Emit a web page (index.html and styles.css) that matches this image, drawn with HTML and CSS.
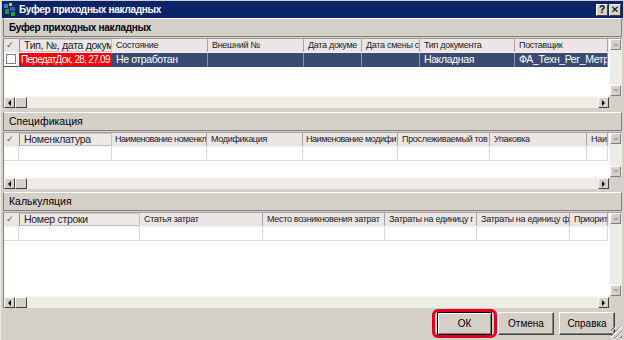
FILE: index.html
```html
<!DOCTYPE html>
<html>
	<head>
		<meta charset="utf-8">
		<title>Буфер приходных накладных</title>
		<link rel="stylesheet" href="styles.css">
	</head>
	<body>
		<div class="window">
			<div class="titlebar">
				<svg class="app-icon" width="12" height="13" viewBox="0 0 12 13">
					<rect x="0" y="1" width="4" height="4" fill="#2d7fd0"/>
					<rect x="5" y="0" width="3" height="3" fill="#f0c020"/>
					<rect x="1" y="6" width="4" height="5" fill="#1a9a3a"/>
					<rect x="6" y="4" width="5" height="4" fill="#3060b0"/>
					<rect x="7" y="9" width="4" height="4" fill="#20a040"/>
				</svg>
				<span class="title">Буфер приходных накладных</span>
				<span class="tb-btns">
					<span class="tb-btn">?</span>
					<span class="tb-btn">✕</span>
				</span>
			</div>

			<div class="content">
				<!-- буфер -->
				<div class="caption bold">Буфер приходных накладных</div>
				<div class="grid g1">
					<div class="grid-main">
						<div class="grid-area">
							<div class="hrow">
								<div class="hc ck">✓</div>
								<div class="hc big w93">Тип, №, дата докум</div>
								<div class="hc w96">Состояние</div>
								<div class="hc w96">Внешний №</div>
								<div class="hc w58">Дата докуме</div>
								<div class="hc w58">Дата смены с</div>
								<div class="hc w95">Тип документа</div>
								<div class="hc w93">Поставщик</div>
							</div>
							<div class="drow sel">
								<div class="dc ck"><span class="box"></span></div>
								<div class="dc red w93">ПередатДок, 28, 27.09</div>
								<div class="dc w96">Не отработан</div>
								<div class="dc w96"></div>
								<div class="dc w58"></div>
								<div class="dc w58"></div>
								<div class="dc w95">Накладная</div>
								<div class="dc w93">ФА_Техн_Рег_Метр</div>
							</div>
						</div>
						<div class="hscroll">
							<span class="sb-btn"><i class="arr left"></i></span>
							<span class="sb-btn thumb"></span>
							<span class="sb-track"></span>
							<span class="sb-btn"><i class="arr right"></i></span>
						</div>
					</div>
					<div class="vscroll">
						<span class="sb-btn"><i class="arr up"></i></span>
						<span class="sb-track"></span>
						<span class="sb-btn"><i class="arr down"></i></span>
						<span class="corner"></span>
					</div>
				</div>

				<!-- спецификация -->
				<div class="caption">Спецификация</div>
				<div class="grid g2">
					<div class="grid-main">
						<div class="grid-area">
							<div class="hrow">
								<div class="hc ck">✓</div>
								<div class="hc big w93">Номенклатура</div>
								<div class="hc tight w95">Наименование номенкл</div>
								<div class="hc w96">Модификация</div>
								<div class="hc tight w95">Наименование модифи</div>
								<div class="hc w92">Прослеживаемый тов</div>
								<div class="hc w97">Упаковка</div>
								<div class="hc w21">Наи</div>
							</div>
							<div class="drow">
								<div class="dc ck"></div>
								<div class="dc w93"></div>
								<div class="dc w95"></div>
								<div class="dc w96"></div>
								<div class="dc w95"></div>
								<div class="dc w92"></div>
								<div class="dc w97"></div>
								<div class="dc w21"></div>
							</div>
						</div>
						<div class="hscroll">
							<span class="sb-btn"><i class="arr left"></i></span>
							<span class="sb-btn thumb"></span>
							<span class="sb-track"></span>
							<span class="sb-btn"><i class="arr right"></i></span>
						</div>
					</div>
					<div class="vscroll">
						<span class="sb-btn"><i class="arr up"></i></span>
						<span class="sb-track"></span>
						<span class="sb-btn"><i class="arr down"></i></span>
						<span class="corner"></span>
					</div>
				</div>

				<!-- калькуляция -->
				<div class="caption">Калькуляция</div>
				<div class="grid g3">
					<div class="grid-main">
						<div class="grid-area">
							<div class="hrow">
								<div class="hc ck">✓</div>
								<div class="hc big w121">Номер строки</div>
								<div class="hc w123">Статья затрат</div>
								<div class="hc w122">Место возникновения затрат</div>
								<div class="hc w92">Затраты на единицу г</div>
								<div class="hc w93">Затраты на единицу ф</div>
								<div class="hc w38">Приорит</div>
							</div>
							<div class="drow">
								<div class="dc ck"></div>
								<div class="dc w121"></div>
								<div class="dc w123"></div>
								<div class="dc w122"></div>
								<div class="dc w92"></div>
								<div class="dc w93"></div>
								<div class="dc w38"></div>
							</div>
						</div>
						<div class="hscroll">
							<span class="sb-btn"><i class="arr left"></i></span>
							<span class="sb-btn thumb"></span>
							<span class="sb-track"></span>
							<span class="sb-btn"><i class="arr right"></i></span>
						</div>
					</div>
					<div class="vscroll">
						<span class="sb-btn"><i class="arr up"></i></span>
						<span class="sb-track"></span>
						<span class="sb-btn"><i class="arr down"></i></span>
						<span class="corner"></span>
					</div>
				</div>
			</div>

			<div class="buttons">
				<span class="ring"><button class="btn def">ОК</button></span>
				<button class="btn">Отмена</button>
				<button class="btn">Справка</button>
			</div>
			<span class="grip"></span>
		</div>
	</body>
</html>
```

FILE: styles.css
```css
* {
	margin: 0;
	padding: 0;
	box-sizing: border-box;
}

body {
	font-family: "Liberation Sans", "DejaVu Sans", sans-serif;
	font-size: 11px;
	color: #000;
	background: #fff;
}

.window {
	width: 624px;
	height: 340px;
	background: #d4d0c8;
	display: flex;
	flex-direction: column;
	padding-top: 1px;
	position: relative;
	overflow: hidden;
	border-left: 1px solid #ece9e2;
}

/* заголовок окна */
.titlebar {
	height: 17px;
	margin: 0 1px 0 1px;
	background: #0a246a;
	color: #fff;
	display: flex;
	align-items: center;
	padding-left: 2px;
	gap: 3px;
	font-weight: bold;
	font-size: 10px;
	letter-spacing: -0.3px;
}

.tb-btns {
	margin-left: auto;
	display: flex;
	gap: 1px;
	padding-right: 2px;
	letter-spacing: 0;
}

.tb-btn {
	width: 12px;
	height: 12px;
	background: #d4d0c8;
	border: 1px solid;
	border-color: #fff #404040 #404040 #fff;
	color: #000;
	font-size: 10px;
	line-height: 10px;
	text-align: center;
	font-weight: bold;
}

.content {
	padding: 0 2px 0 2px;
	display: flex;
	flex-direction: column;
}

.caption {
	height: 19px;
	padding-left: 5px;
	line-height: 17px;
	border: 1px solid;
	border-color: #fff #808080 #808080 #808080;
	background: #d4d0c8;
	font-size: 10.5px;
}

.caption.bold {
	font-weight: bold;
	font-size: 10px;
	letter-spacing: -0.3px;
}

.grid {
	display: flex;
	border-left: 1px solid #808080;
	border-top: 1px solid #a0a0a0;
	margin-top: 1px;
	background: #fff;
}

.g1 { height: 70px; margin-bottom: 4px; }
.g2 { height: 57px; margin-bottom: 3px; }
.g3 { height: 96px; }

.grid-main {
	flex: 1;
	display: flex;
	flex-direction: column;
	min-width: 0;
}

.grid-area {
	flex: 1;
	overflow: hidden;
	background: #fff;
}

/* строки таблиц */
.hrow {
	display: flex;
	height: 14px;
	background: #ebe5e5;
	border-bottom: 1px solid #f4f0f0;
}

.hc {
	flex: none;
	padding-left: 4px;
	white-space: nowrap;
	overflow: hidden;
	border-right: 1px solid #a8a4a0;
	line-height: 13px;
	font-size: 9px;
	letter-spacing: -0.3px;
	color: #222;
}

.hc.tight {
	padding-left: 3px;
	letter-spacing: -0.45px;
}

.hc.big {
	font-size: 10.5px;
	letter-spacing: -0.3px;
	border: 1px solid #c8c0c0;
	border-left-color: #888;
	background: #ede7e7;
	line-height: 11px;
}

.hc.ck {
	color: #555;
	padding-left: 2px;
	border-right: none;
	letter-spacing: 0;
}

.drow {
	display: flex;
	height: 14px;
}

.dc {
	flex: none;
	padding-left: 4px;
	white-space: nowrap;
	overflow: hidden;
	border-right: 1px solid #d8d8d8;
	border-bottom: 1px solid #d8d8d8;
	line-height: 13px;
	font-size: 10.5px;
	letter-spacing: -0.4px;
}

.sel .dc {
	background: #3b4a72;
	color: #fff;
	border-right-color: #8a93b0;
	border-bottom-color: #3b4a72;
}

.sel .dc.red {
	background: #ff0000;
	border-right-color: #ff0000;
	padding-left: 2px;
	font-size: 10px;
	letter-spacing: -0.7px;
}

.sel .dc.ck {
	background: #fff;
	border-right-color: #fff;
	padding-left: 2px;
}

.box {
	display: block;
	width: 10px;
	height: 10px;
	margin-top: 1px;
	border: 1px solid #808080;
	background: #fff;
}

.ck { width: 15px; }
.w21 { width: 21px; }
.w38 { width: 38px; }
.w58 { width: 58px; }
.w92 { width: 92px; }
.w93 { width: 93px; }
.w95 { width: 95px; }
.w96 { width: 96px; }
.w97 { width: 97px; }
.w121 { width: 121px; }
.w122 { width: 122px; }
.w123 { width: 123px; }

/* полосы прокрутки */
.hscroll {
	height: 12px;
	display: flex;
	background: #ecebe6;
	border-top: 1px solid #f8f8f6;
}

.sb-btn {
	flex: none;
	width: 11px;
	height: 11px;
	background: #d4d0c8;
	border: 1px solid;
	border-color: #fff #404040 #404040 #fff;
	display: flex;
	align-items: center;
	justify-content: center;
}

.sb-btn.thumb {
	width: 12px;
}

.sb-track {
	flex: 1;
}

.vscroll {
	width: 13px;
	display: flex;
	flex-direction: column;
	align-items: flex-end;
	background: #ecebe6;
	padding-right: 1px;
	border-left: 1px solid #f8f8f6;
}

.vscroll .sb-btn {
	border-color: #fff #808080 #808080 #fff;
}

.vscroll .corner {
	width: 13px;
	height: 12px;
	margin-right: -1px;
	background: #d4d0c8;
}

.arr {
	display: block;
	width: 0;
	height: 0;
	border: 3px solid transparent;
}

.arr.left {
	border-left-width: 0;
	border-right-color: #000;
}

.arr.right {
	border-right-width: 0;
	border-left-color: #000;
}

.arr.up {
	border-width: 0 3px 3px 3px;
	border-bottom-color: #a8a8a8;
}

.arr.down {
	border-width: 3px 3px 0 3px;
	border-top-color: #a8a8a8;
}

/* кнопки */
.buttons {
	flex: 1;
	display: flex;
	justify-content: flex-end;
	align-items: flex-start;
	padding: 4px 9px 0 0;
	gap: 5px;
}

.btn {
	width: 56px;
	height: 23px;
	background: #d4d0c8;
	border: 1px solid;
	border-color: #fff #404040 #404040 #fff;
	box-shadow: inset -1px -1px #808080;
	font-family: "Liberation Sans", "DejaVu Sans", sans-serif;
	font-size: 10px;
	font-weight: normal;
	color: #000;
}

.btn.def {
	width: 55px;
	border-color: #000;
	box-shadow: inset 1px 1px #fff, inset -1px -1px #808080;
}

.ring {
	display: block;
	margin-top: -3px;
	margin-right: -4px;
	padding: 0 2px;
	border: 3px solid #e0001b;
	border-radius: 6px;
}

.grip {
	position: absolute;
	right: 2px;
	bottom: 2px;
	width: 11px;
	height: 11px;
	background: repeating-linear-gradient(135deg, transparent 0 2px, #808080 2px 3px, #fff 3px 4px);
}
```
